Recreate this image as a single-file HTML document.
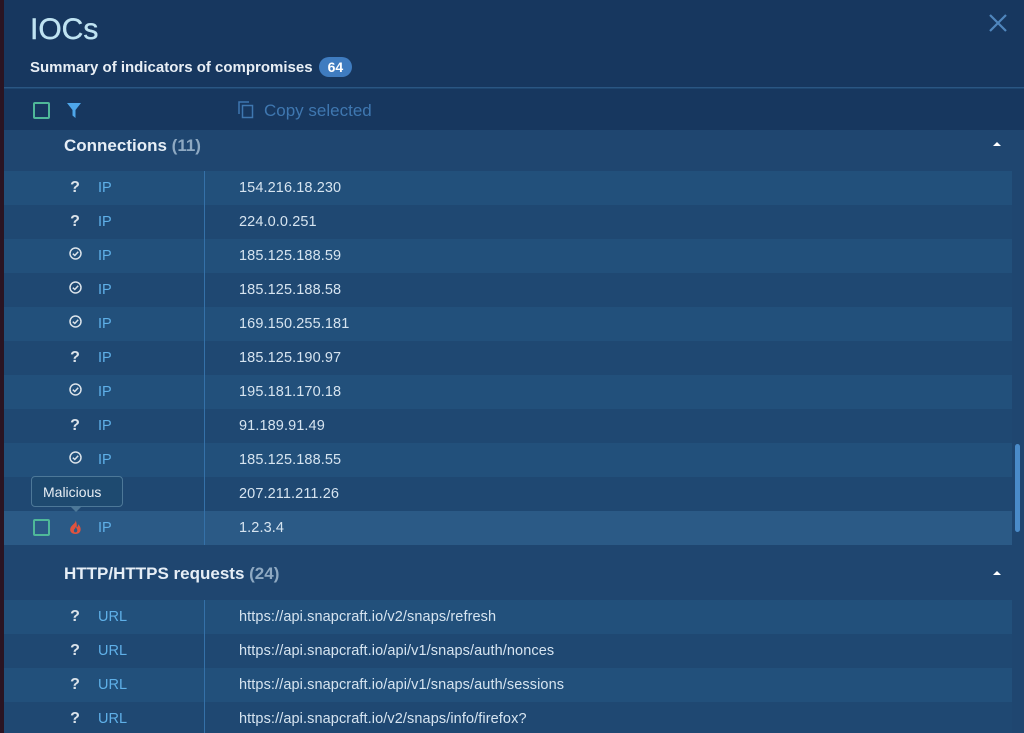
<!DOCTYPE html>
<html><head><style>
*{margin:0;padding:0;box-sizing:border-box}
body{width:1024px;height:733px;overflow:hidden;background:#2a1422;font-family:"Liberation Sans",sans-serif;position:relative}
.panel{position:absolute;left:4px;top:0;width:1020px;height:733px;background:#1e4670;overflow:hidden}
.hdr{position:absolute;left:0;top:0;width:1020px;height:88px;background:#17375f;border-bottom:1px solid #2a5683}
.title{position:absolute;left:26px;top:13px;font-size:30px;color:#bfe3f2;-webkit-text-stroke:0.4px #bfe3f2}
.sub{position:absolute;left:26px;top:57px;font-size:15px;font-weight:bold;color:#e8eef5}
.badge{display:inline-block;margin-left:6px;background:#3f7cc0;color:#fff;border-radius:12px;padding:2px 9px;font-size:14px}
.close{position:absolute;left:984px;top:13px}
.tb{position:absolute;left:0;top:89px;width:1020px;height:41px;background:#17375f}
.cb{position:absolute;width:17px;height:17px;border:2px solid #4fb899;border-radius:2px}
.copy{position:absolute;left:260px;top:12px;font-size:17px;color:#3f77b0}
.sec{position:absolute;left:0;width:1008px;background:#1f4670}
.sec .t{position:absolute;left:60px;font-size:17px;font-weight:bold;color:#e6eef6}
.sec .t span{color:#8ea9c2}
.caret{position:absolute;left:989px;width:0;height:0;border-left:4px solid transparent;border-right:4px solid transparent;border-bottom:4px solid #fff}
.row{position:absolute;left:0;width:1008px;height:34px;font-size:14.5px}
.row.a{background:#22507b}.row.b{background:#1f4872}.row.s{background:#2b5a86}
.ic{position:absolute;left:64px;top:8px;width:14px;text-align:center;color:#dbe3ea;font-weight:bold;font-size:16px}
.ty{position:absolute;left:94px;top:9px;color:#5fb0e8}
.va{position:absolute;left:235px;top:9px;color:#d6e4f0;letter-spacing:0.1px}
.div{position:absolute;left:200px;top:0;width:1px;height:34px;background:#3571a8}
.sb{position:absolute;left:1008px;top:130px;width:12px;height:603px;background:#1f4670}
.th{position:absolute;left:1011px;top:444px;width:5px;height:88px;background:#4a8bc9;border-radius:3px}
.tip{position:absolute;left:27px;top:476px;width:92px;height:31px;background:#1e4a70;border:1px solid #4d7898;border-radius:4px;color:#e8eef4;font-size:14px;padding:7px 0 0 11px}
.tipa{position:absolute;left:67px;top:507px;border-left:5px solid transparent;border-right:5px solid transparent;border-top:5px solid #4d7898}
</style></head><body>
<div class="panel">
<div class="hdr">
<div class="title">IOCs</div>
<div class="sub">Summary of indicators of compromises<span class="badge">64</span></div>
<svg class="close" width="20" height="20" viewBox="0 0 20 20"><path d="M2 2L18 18M18 2L2 18" stroke="#4f86bd" stroke-width="2.2"/></svg>
</div>
<div class="tb">
<div class="cb" style="left:29px;top:13px"></div>
<svg style="position:absolute;left:63px;top:14px" width="14" height="15" viewBox="0 0 14 15"><path d="M0 0H14L8.5 7V15L5.5 12.5V7Z" fill="#4ea6ea"/></svg>
<svg style="position:absolute;left:234px;top:12px" width="16" height="18" viewBox="0 0 16 18"><rect x="4.5" y="4.5" width="10" height="12" fill="none" stroke="#3f77b0" stroke-width="1.5"/><path d="M1 13V1H11" fill="none" stroke="#3f77b0" stroke-width="1.5"/></svg>
<div class="copy">Copy selected</div>
</div>
<div class="sec" style="top:130px;height:41px"><div class="t" style="top:6px">Connections <span>(11)</span></div><div class="caret" style="top:12px"></div></div>
<div class="row a" style="top:171px"><div class="ic">?</div><div class="ty">IP</div><div class="div"></div><div class="va">154.216.18.230</div></div>
<div class="row b" style="top:205px"><div class="ic">?</div><div class="ty">IP</div><div class="div"></div><div class="va">224.0.0.251</div></div>
<div class="row a" style="top:239px"><div class="ic"><svg width="13" height="13" viewBox="0 0 13 13"><circle cx="6.5" cy="6.5" r="5.5" fill="none" stroke="#dbe3ea" stroke-width="1.5"/><path d="M3.8 6.7L5.8 8.5L9.2 4.8" fill="none" stroke="#dbe3ea" stroke-width="1.5"/></svg></div><div class="ty">IP</div><div class="div"></div><div class="va">185.125.188.59</div></div>
<div class="row b" style="top:273px"><div class="ic"><svg width="13" height="13" viewBox="0 0 13 13"><circle cx="6.5" cy="6.5" r="5.5" fill="none" stroke="#dbe3ea" stroke-width="1.5"/><path d="M3.8 6.7L5.8 8.5L9.2 4.8" fill="none" stroke="#dbe3ea" stroke-width="1.5"/></svg></div><div class="ty">IP</div><div class="div"></div><div class="va">185.125.188.58</div></div>
<div class="row a" style="top:307px"><div class="ic"><svg width="13" height="13" viewBox="0 0 13 13"><circle cx="6.5" cy="6.5" r="5.5" fill="none" stroke="#dbe3ea" stroke-width="1.5"/><path d="M3.8 6.7L5.8 8.5L9.2 4.8" fill="none" stroke="#dbe3ea" stroke-width="1.5"/></svg></div><div class="ty">IP</div><div class="div"></div><div class="va">169.150.255.181</div></div>
<div class="row b" style="top:341px"><div class="ic">?</div><div class="ty">IP</div><div class="div"></div><div class="va">185.125.190.97</div></div>
<div class="row a" style="top:375px"><div class="ic"><svg width="13" height="13" viewBox="0 0 13 13"><circle cx="6.5" cy="6.5" r="5.5" fill="none" stroke="#dbe3ea" stroke-width="1.5"/><path d="M3.8 6.7L5.8 8.5L9.2 4.8" fill="none" stroke="#dbe3ea" stroke-width="1.5"/></svg></div><div class="ty">IP</div><div class="div"></div><div class="va">195.181.170.18</div></div>
<div class="row b" style="top:409px"><div class="ic">?</div><div class="ty">IP</div><div class="div"></div><div class="va">91.189.91.49</div></div>
<div class="row a" style="top:443px"><div class="ic"><svg width="13" height="13" viewBox="0 0 13 13"><circle cx="6.5" cy="6.5" r="5.5" fill="none" stroke="#dbe3ea" stroke-width="1.5"/><path d="M3.8 6.7L5.8 8.5L9.2 4.8" fill="none" stroke="#dbe3ea" stroke-width="1.5"/></svg></div><div class="ty">IP</div><div class="div"></div><div class="va">185.125.188.55</div></div>
<div class="row b" style="top:477px"><div class="div"></div><div class="va">207.211.211.26</div></div>
<div class="row s" style="top:511px"><div class="cb" style="left:29px;top:8px"></div><div class="ic" style="top:8px"><svg width="13" height="16" viewBox="0 0 12 14"><path d="M6 0.5C7 3 3 4.5 1.5 7.5C0 11 2.5 13.5 6 13.5C9.5 13.5 11.5 11 10.5 7.5C10 6 9 5 8.5 4.5C8.5 6 8 7 7 7.5C7.5 5 7 2.5 6 0.5Z M6 12C4.5 12 4 10.5 5 9C5.5 8.5 6 8 6 7C7.5 8.5 8 10 7.5 11C7.2 11.6 6.6 12 6 12Z" fill="#e0533e" fill-rule="evenodd"/></svg></div><div class="ty">IP</div><div class="div"></div><div class="va">1.2.3.4</div></div>
<div class="sec" style="top:545px;height:55px"><div class="t" style="top:19px">HTTP/HTTPS requests <span>(24)</span></div><div class="caret" style="top:26px"></div></div>
<div class="row a" style="top:600px"><div class="ic">?</div><div class="ty">URL</div><div class="div"></div><div class="va">https://api.snapcraft.io/v2/snaps/refresh</div></div>
<div class="row b" style="top:634px"><div class="ic">?</div><div class="ty">URL</div><div class="div"></div><div class="va">https://api.snapcraft.io/api/v1/snaps/auth/nonces</div></div>
<div class="row a" style="top:668px"><div class="ic">?</div><div class="ty">URL</div><div class="div"></div><div class="va">https://api.snapcraft.io/api/v1/snaps/auth/sessions</div></div>
<div class="row b" style="top:702px"><div class="ic">?</div><div class="ty">URL</div><div class="div"></div><div class="va">https://api.snapcraft.io/v2/snaps/info/firefox?</div></div>
<div class="sb"></div><div class="th"></div>
<div class="tip">Malicious</div><div class="tipa"></div>
</div>
</body></html>
